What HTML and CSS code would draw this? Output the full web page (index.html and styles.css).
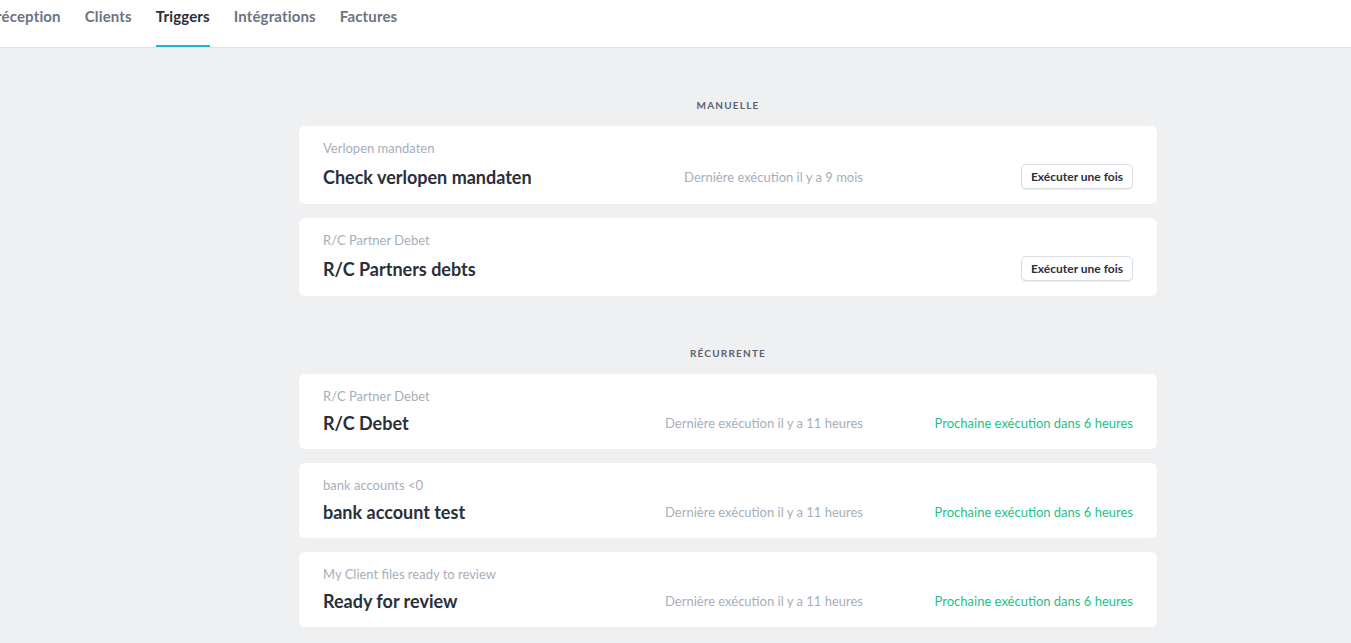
FILE: index.html
```html
<!DOCTYPE html>
<html lang="fr">
<head>
<meta charset="utf-8">
<title>Triggers</title>
<link rel="stylesheet" href="styles.css">
</head>
<body>
<header class="topbar">
  <nav class="tabs">
    <a class="tab">réception</a>
    <a class="tab">Clients</a>
    <a class="tab active">Triggers</a>
    <a class="tab">Intégrations</a>
    <a class="tab">Factures</a>
  </nav>
</header>
<main class="content">
  <section class="group">
    <h2 class="group-title">Manuelle</h2>
    <div class="card">
      <div class="card-sub">Verlopen mandaten</div>
      <div class="card-row">
        <div class="card-title">Check verlopen mandaten</div>
        <div class="last-run">Dernière exécution il y a 9 mois</div>
        <div class="next"><button class="btn">Exécuter une fois</button></div>
      </div>
    </div>
    <div class="card">
      <div class="card-sub">R/C Partner Debet</div>
      <div class="card-row">
        <div class="card-title">R/C Partners debts</div>
        <div class="last-run"></div>
        <div class="next"><button class="btn">Exécuter une fois</button></div>
      </div>
    </div>
  </section>
  <section class="group">
    <h2 class="group-title">Récurrente</h2>
    <div class="card">
      <div class="card-sub">R/C Partner Debet</div>
      <div class="card-row">
        <div class="card-title">R/C Debet</div>
        <div class="last-run">Dernière exécution il y a 11 heures</div>
        <div class="next green">Prochaine exécution dans 6 heures</div>
      </div>
    </div>
    <div class="card">
      <div class="card-sub">bank accounts &lt;0</div>
      <div class="card-row">
        <div class="card-title">bank account test</div>
        <div class="last-run">Dernière exécution il y a 11 heures</div>
        <div class="next green">Prochaine exécution dans 6 heures</div>
      </div>
    </div>
    <div class="card">
      <div class="card-sub">My Client files ready to review</div>
      <div class="card-row">
        <div class="card-title">Ready for review</div>
        <div class="last-run">Dernière exécution il y a 11 heures</div>
        <div class="next green">Prochaine exécution dans 6 heures</div>
      </div>
    </div>
  </section>
</main>
</body>
</html>
```
FILE: styles.css
```css
* { box-sizing: border-box; }
html, body { margin: 0; padding: 0; }
body {
  background: #eff0f2;
  font-family: Lato, "Open Sans", Arial, sans-serif;
  color: #2a2f3a;
  height: 643px;
  overflow: hidden;
}
.topbar {
  background: #ffffff;
  border-bottom: 1px solid #dfe1e5;
  height: 48px;
}
.tabs {
  display: flex;
  gap: 24px;
  height: 47px;
  margin-left: -4px;
}
.tab {
  display: block;
  font-size: 15px;
  font-weight: 700;
  line-height: 18px;
  letter-spacing: 0.15px;
  color: #6b7381;
  padding-top: 7px;
  height: 47px;
  border-bottom: 2px solid transparent;
}
.tab.active {
  color: #2a2f3a;
  border-bottom-color: #1cb5d8;
}
.content {
  width: 858px;
  margin-left: 299px;
}
.group { padding-top: 49px; }
.group-title {
  margin: 0 0 13px;
  text-align: center;
  font-size: 10px;
  line-height: 16px;
  font-weight: 700;
  letter-spacing: 1.2px;
  text-transform: uppercase;
  color: #5b6270;
}
.card {
  background: #ffffff;
  border-radius: 6px;
  padding: 14px 24px 15px;
  margin-bottom: 14px;
}
.card:last-child { margin-bottom: 0; }
.card-sub {
  font-size: 13px;
  line-height: 16px;
  color: #a6aeba;
  margin-bottom: 8px;
}
.card-row {
  display: flex;
  align-items: center;
  min-height: 22px;
}
.card-title {
  flex: 1;
  font-size: 18px;
  line-height: 22px;
  font-weight: 700;
  color: #2a2f3a;
}
.last-run {
  font-size: 13px;
  color: #a6aeba;
  text-align: right;
}
.next {
  width: 270px;
  text-align: right;
  font-size: 13px;
}
.green { color: #1fbf89; }
.btn {
  font-family: Lato, "Open Sans", Arial, sans-serif;
  font-size: 12px;
  font-weight: 700;
  color: #2a2f3a;
  background: #ffffff;
  border: 1px solid #d9dce1;
  border-radius: 5px;
  box-shadow: 0 1px 1px rgba(0,0,0,0.08);
  height: 25px;
  padding: 0 9px;
  line-height: 23px;
  cursor: pointer;
}
```
